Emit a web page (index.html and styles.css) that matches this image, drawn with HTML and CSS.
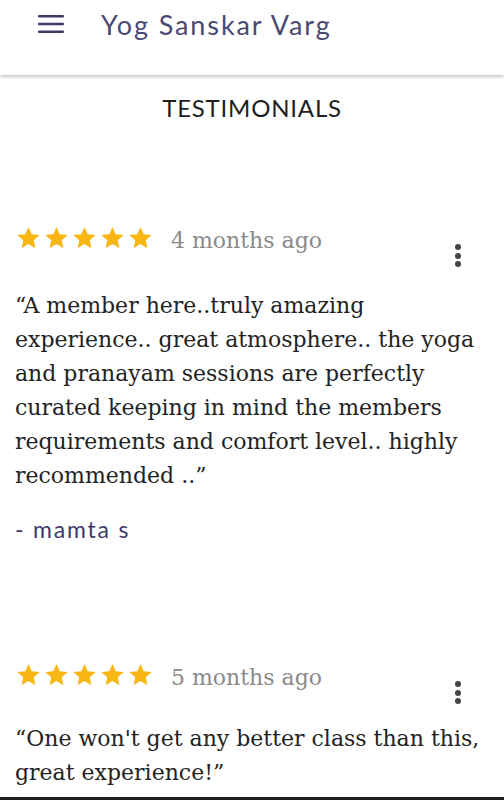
FILE: index.html
```html
<!DOCTYPE html>
<html lang="en">
<head>
<meta charset="utf-8">
<title>Yog Sanskar Varg - Testimonials</title>
<link rel="stylesheet" href="styles.css">
</head>
<body>
<header class="topbar">
  <button class="menu-btn" aria-label="Menu">
    <svg width="26" height="20" viewBox="0 0 26 20"><rect x="0" y="1" width="26" height="2.6" rx="1"/><rect x="0" y="8.7" width="26" height="2.6" rx="1"/><rect x="0" y="16.4" width="26" height="2.6" rx="1"/></svg>
  </button>
  <h1 class="brand">Yog Sanskar Varg</h1>
</header>
<main class="content">
  <h2 class="section-title">TESTIMONIALS</h2>

  <article class="review">
    <div class="review-head">
      <div class="meta">
        <span class="stars" aria-label="5 stars">
          <svg viewBox="0 0 24 24"><path d="M12 1.8l3.1 7.1 7.7.7-5.8 5.1 1.7 7.6L12 18.3l-6.7 4 1.7-7.6-5.8-5.1 7.7-.7z"/></svg>
          <svg viewBox="0 0 24 24"><path d="M12 1.8l3.1 7.1 7.7.7-5.8 5.1 1.7 7.6L12 18.3l-6.7 4 1.7-7.6-5.8-5.1 7.7-.7z"/></svg>
          <svg viewBox="0 0 24 24"><path d="M12 1.8l3.1 7.1 7.7.7-5.8 5.1 1.7 7.6L12 18.3l-6.7 4 1.7-7.6-5.8-5.1 7.7-.7z"/></svg>
          <svg viewBox="0 0 24 24"><path d="M12 1.8l3.1 7.1 7.7.7-5.8 5.1 1.7 7.6L12 18.3l-6.7 4 1.7-7.6-5.8-5.1 7.7-.7z"/></svg>
          <svg viewBox="0 0 24 24"><path d="M12 1.8l3.1 7.1 7.7.7-5.8 5.1 1.7 7.6L12 18.3l-6.7 4 1.7-7.6-5.8-5.1 7.7-.7z"/></svg>
        </span>
        <span class="time">4 months ago</span>
      </div>
      <span class="kebab" aria-label="More"><i></i><i></i><i></i></span>
    </div>
    <p class="quote">“A member here..truly amazing experience.. great atmosphere.. the yoga and pranayam sessions are perfectly curated keeping in mind the members requirements and comfort level.. highly recommended ..”</p>
    <p class="author">- mamta s</p>
  </article>

  <article class="review">
    <div class="review-head">
      <div class="meta">
        <span class="stars" aria-label="5 stars">
          <svg viewBox="0 0 24 24"><path d="M12 1.8l3.1 7.1 7.7.7-5.8 5.1 1.7 7.6L12 18.3l-6.7 4 1.7-7.6-5.8-5.1 7.7-.7z"/></svg>
          <svg viewBox="0 0 24 24"><path d="M12 1.8l3.1 7.1 7.7.7-5.8 5.1 1.7 7.6L12 18.3l-6.7 4 1.7-7.6-5.8-5.1 7.7-.7z"/></svg>
          <svg viewBox="0 0 24 24"><path d="M12 1.8l3.1 7.1 7.7.7-5.8 5.1 1.7 7.6L12 18.3l-6.7 4 1.7-7.6-5.8-5.1 7.7-.7z"/></svg>
          <svg viewBox="0 0 24 24"><path d="M12 1.8l3.1 7.1 7.7.7-5.8 5.1 1.7 7.6L12 18.3l-6.7 4 1.7-7.6-5.8-5.1 7.7-.7z"/></svg>
          <svg viewBox="0 0 24 24"><path d="M12 1.8l3.1 7.1 7.7.7-5.8 5.1 1.7 7.6L12 18.3l-6.7 4 1.7-7.6-5.8-5.1 7.7-.7z"/></svg>
        </span>
        <span class="time">5 months ago</span>
      </div>
      <span class="kebab" aria-label="More"><i></i><i></i><i></i></span>
    </div>
    <p class="quote quote-tight">“One won't get any better class than this, great experience!”</p>
  </article>
</main>
<div class="bottom-edge"></div>
</body>
</html>
```

FILE: styles.css
```css
html, body {
  margin: 0;
  padding: 0;
  background: #ffffff;
  height: 800px;
  overflow: hidden;
}
body {
  position: relative;
  font-family: "DejaVu Serif", "Liberation Serif", serif;
  color: #222222;
}
.topbar {
  height: 75px;
  display: flex;
  align-items: flex-start;
  padding: 0 0 0 38px;
  box-sizing: border-box;
  background: #ffffff;
  box-shadow: 0 2px 3px rgba(0,0,0,0.22);
  position: relative;
  z-index: 2;
}
.menu-btn {
  border: 0;
  background: transparent;
  padding: 0;
  margin: 14px 0 0 0;
  width: 26px;
  height: 20px;
  display: block;
}
.menu-btn svg { display: block; fill: #3d3a69; }
.brand {
  margin: 7px 0 0 37px;
  font-family: "Lato", "Noto Sans", sans-serif;
  font-weight: 400;
  font-size: 27px;
  letter-spacing: 1.9px;
  color: #4a4874;
  line-height: 36px;
}
.content {
  padding: 0 15px;
}
.section-title {
  margin: 18px 0 0 0;
  text-align: center;
  font-family: "Lato", "Noto Sans", sans-serif;
  font-weight: 400;
  font-size: 24px;
  line-height: 30px;
  letter-spacing: 0.8px;
  color: #1f1f1f;
}
.review {
  margin-top: 102px;
}
.review + .review {
  margin-top: 119px;
}
.review-head {
  display: flex;
  justify-content: space-between;
  align-items: flex-start;
}
.meta {
  display: flex;
  align-items: flex-start;
  gap: 18px;
  padding-left: 1px;
}
.stars { display: flex; gap: 3px; }
.stars svg { width: 25px; height: 25px; fill: #f7b614; display: block; }
.time {
  margin-top: 1.5px;
  font-size: 22px;
  color: #8a8a8a;
  line-height: 28px;
}
.kebab {
  display: flex;
  flex-direction: column;
  gap: 2.5px;
  margin: 19px 28px 0 0;
}
.kebab i {
  display: block;
  width: 6px;
  height: 6px;
  border-radius: 50%;
  background: #454545;
}
.quote {
  margin: 22px 0 0 0;
  font-size: 22px;
  line-height: 34px;
  color: #232323;
}
.quote-tight {
  margin-top: 18px;
}
.author {
  margin: 22px 0 0 0;
  font-family: "Lato", "Noto Sans", sans-serif;
  font-size: 23px;
  line-height: 28px;
  letter-spacing: 1.8px;
  color: #3d3a69;
}
.bottom-edge {
  position: absolute;
  left: 0;
  right: 0;
  bottom: 0;
  height: 3px;
  background: #202020;
}
```
